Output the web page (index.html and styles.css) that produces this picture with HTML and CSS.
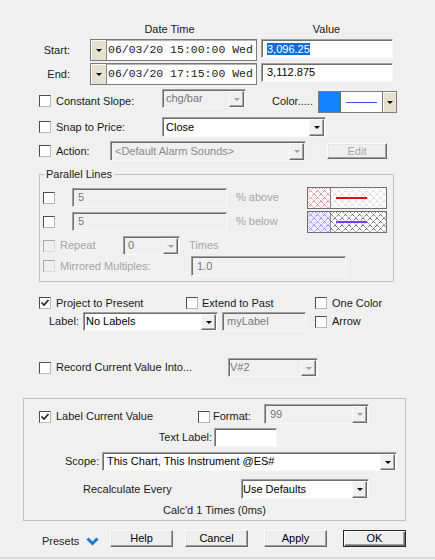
FILE: index.html
```html
<!DOCTYPE html>
<html>
<head>
<meta charset="utf-8">
<title>Line Properties</title>
<link rel="stylesheet" href="styles.css">
</head>
<body>
<div class="dlg">
  <div class="row r-head">
    <div class="h-dt">Date Time</div>
    <div class="h-val">Value</div>
  </div>

  <div class="row r-dt">
    <div class="dt-lbl">Start:</div>
    <div class="dtcombo"><span class="dtbtn"><i class="arr"></i></span><span class="dttxt">06/03/20 15:00:00 Wed</span></div>
    <div class="tb val"><span class="sel">3,096.25</span></div>
  </div>
  <div class="row r-dt r-end">
    <div class="dt-lbl">End:</div>
    <div class="dtcombo"><span class="dtbtn"><i class="arr"></i></span><span class="dttxt">06/03/20 17:15:00 Wed</span></div>
    <div class="tb val"><span>3,112.875</span></div>
  </div>

  <div class="row r-cs pad39">
    <span class="cb"></span>
    <span class="lbl w-cs">Constant Slope:</span>
    <div class="combo dis c-chg"><span class="ctxt">chg/bar</span><span class="dd"><i class="arr"></i></span></div>
    <span class="color-lbl">Color.....</span>
    <div class="colorw"><span class="sw"></span><span class="lnarea"><i class="ln"></i></span><span class="cbtn"><i class="arr"></i></span></div>
  </div>

  <div class="row r-snap pad39">
    <span class="cb"></span>
    <span class="lbl w-cs">Snap to Price:</span>
    <div class="combo c-close"><span class="ctxt">Close</span><span class="dd"><i class="arr"></i></span></div>
  </div>

  <div class="row r-action pad39">
    <span class="cb"></span>
    <span class="lbl w-act">Action:</span>
    <div class="combo dis c-alarm"><span class="ctxt">&lt;Default Alarm Sounds&gt;</span><span class="dd"><i class="arr"></i></span></div>
    <div class="btn dis b-edit">Edit</div>
  </div>

  <div class="grp1">
    <div class="gtitle">Parallel Lines</div>
    <div class="row grow g-r1">
      <span class="cb"></span>
      <div class="tb dis g-tb">5</div>
      <span class="gray pct">% above</span>
      <svg class="swatch" width="80" height="22" viewBox="0 0 80 22">
        <defs>
          <pattern id="pRed" width="7" height="7" patternUnits="userSpaceOnUse">
            <rect width="7" height="7" fill="#fff"/>
            <path d="M0 0L7 7M7 0L0 7" stroke="#d23a3a" stroke-width="0.9" stroke-dasharray="1 1"/>
          </pattern>
          <pattern id="pLight" width="7" height="7" patternUnits="userSpaceOnUse">
            <rect width="7" height="7" fill="#fff"/>
            <path d="M0 0L7 7M7 0L0 7" stroke="#bdbdbd" stroke-width="0.9" stroke-dasharray="1 1"/>
          </pattern>
        </defs>
        <rect x="0.5" y="0.5" width="79" height="21" fill="#fff" stroke="#707070"/>
        <rect x="1" y="1" width="22" height="20" fill="url(#pRed)"/>
        <line x1="23.5" y1="1" x2="23.5" y2="21" stroke="#8a8a8a"/>
        <rect x="24" y="1" width="55" height="20" fill="url(#pLight)"/>
        <line x1="29" y1="11" x2="60" y2="11" stroke="#e01010" stroke-width="2"/>
      </svg>
    </div>
    <div class="row grow g-r2">
      <span class="cb"></span>
      <div class="tb dis g-tb">5</div>
      <span class="gray pct">% below</span>
      <svg class="swatch" width="80" height="22" viewBox="0 0 80 22">
        <defs>
          <pattern id="pBlue" width="7" height="7" patternUnits="userSpaceOnUse">
            <rect width="7" height="7" fill="#eeeaff"/>
            <path d="M0 0L7 7M7 0L0 7" stroke="#5a4cff" stroke-width="0.9" stroke-dasharray="1 1"/>
          </pattern>
          <pattern id="pBlack" width="7" height="7" patternUnits="userSpaceOnUse">
            <rect width="7" height="7" fill="#fff"/>
            <path d="M0 0L7 7M7 0L0 7" stroke="#1a1a1a" stroke-width="0.9" stroke-dasharray="1 1"/>
          </pattern>
        </defs>
        <rect x="0.5" y="0.5" width="79" height="21" fill="#fff" stroke="#707070"/>
        <rect x="1" y="1" width="22" height="20" fill="url(#pBlue)"/>
        <line x1="23.5" y1="1" x2="23.5" y2="21" stroke="#8a8a8a"/>
        <rect x="24" y="1" width="55" height="20" fill="url(#pBlack)"/>
        <line x1="29" y1="11" x2="60" y2="11" stroke="#7a3cf0" stroke-width="2"/>
      </svg>
    </div>
    <div class="row grow g-r3">
      <span class="cb dis"></span>
      <span class="lbl gray w-rep">Repeat</span>
      <div class="combo dis c-rep"><span class="ctxt">0</span><span class="dd"><i class="arr"></i></span></div>
      <span class="gray times">Times</span>
    </div>
    <div class="row grow g-r4">
      <span class="cb dis"></span>
      <span class="lbl gray w-mir">Mirrored Multiples:</span>
      <div class="tb dis g-tb2">1.0</div>
    </div>
  </div>

  <div class="row r-proj pad39">
    <span class="cb on"><svg width="10" height="10" viewBox="0 0 10 10"><path d="M1.5 4.5L4 7L8.5 2" fill="none" stroke="#222" stroke-width="1.7"/></svg></span>
    <span class="lbl w-proj">Project to Present</span>
    <span class="cb"></span>
    <span class="lbl4 w-ext">Extend to Past</span>
    <span class="cb"></span>
    <span class="lbl">One Color</span>
  </div>

  <div class="row r-label">
    <span class="lab-lbl">Label:</span>
    <div class="combo c-nolab"><span class="ctxt">No Labels</span><span class="dd"><i class="arr"></i></span></div>
    <div class="tb dis t-mylab">myLabel</div>
    <span class="cb cb-arrow"></span>
    <span class="lbl">Arrow</span>
  </div>

  <div class="row r-rec pad39">
    <span class="cb"></span>
    <span class="lbl w-rec">Record Current Value Into...</span>
    <div class="combo dis c-v2"><span class="ctxt">V#2</span><span class="dd"><i class="arr"></i></span></div>
  </div>

  <div class="grp2">
    <div class="row r-lcv">
      <span class="cb on lo"><svg width="10" height="10" viewBox="0 0 10 10"><path d="M1.5 4.5L4 7L8.5 2" fill="none" stroke="#222" stroke-width="1.7"/></svg></span>
      <span class="lbl lo w-lcv">Label Current Value</span>
      <span class="cb lo"></span>
      <span class="lo w-fmt">Format:</span>
      <div class="combo dis c-99"><span class="ctxt">99</span><span class="dd"><i class="arr"></i></span></div>
    </div>
    <div class="row r-tl">
      <span class="tl-lbl">Text Label:</span>
      <div class="tb t-tl"></div>
    </div>
    <div class="row r-scope">
      <span class="sc-lbl">Scope:</span>
      <div class="combo c-scope"><span class="ctxt">This Chart, This Instrument @ES#</span><span class="dd"><i class="arr"></i></span></div>
    </div>
    <div class="row r-recalc">
      <span class="rc-lbl">Recalculate Every</span>
      <div class="combo c-def"><span class="ctxt">Use Defaults</span><span class="dd"><i class="arr"></i></span></div>
    </div>
    <div class="row r-calcd">Calc'd 1 Times (0ms)</div>
  </div>

  <div class="row r-foot">
    <span class="presets">Presets</span>
    <svg class="chev" width="13" height="9" viewBox="0 0 13 9"><path d="M1.5 1.5L6.5 6.5L11.5 1.5" fill="none" stroke="#1c7cd5" stroke-width="3"/></svg>
    <div class="btn b-help">Help</div>
    <div class="btn b-cancel">Cancel</div>
    <div class="btn b-apply">Apply</div>
    <div class="btn def b-ok">OK</div>
  </div>
  <div class="bottom-line"></div>
</div>
</body>
</html>
```

FILE: styles.css
```css
* { box-sizing: border-box; }
html, body { margin: 0; padding: 0; }
body {
  width: 435px;
  height: 560px;
  overflow: hidden;
  background: #f0f0f0;
  font-family: "Liberation Sans", Arial, sans-serif;
  font-size: 11px;
  line-height: 13px;
  color: #1a1a1a;
}
.dlg { padding-top: 22px; }
.row { display: flex; align-items: center; white-space: nowrap; }
.pad39 { padding-left: 39px; }
.gray { color: #a6a6a6; }

/* arrows */
.arr {
  display: block;
  width: 0; height: 0;
  border-left: 3px solid transparent;
  border-right: 3px solid transparent;
  border-top: 3px solid #000;
}
.dis .arr { border-top-color: #a0a0a0; }

/* header */
.r-head { height: 14px; }
.h-dt { margin-left: 86px; width: 167px; text-align: center; }
.h-val { margin-left: 8px; width: 131px; text-align: center; }

/* date rows */
.r-dt { height: 22px; margin-top: 3px; }
.r-end { margin-top: 2px; }
.dt-lbl { width: 70px; text-align: right; }
.dtcombo {
  margin-left: 20px;
  width: 167px;
  height: 22px;
  display: flex;
  border: 1px solid #7a7a7a;
  background: #fff;
  box-shadow: inset 1px 1px 0 #b4b4b4;
}
.dtbtn {
  width: 16px;
  flex: none;
  background: #e4e1d1;
  border-right: 1px solid #8a8a8a;
  box-shadow: inset 1px 1px 0 #fbfaf3;
  display: flex;
  align-items: center;
  justify-content: center;
}
.dttxt {
  font-family: "Liberation Mono", "Courier New", monospace;
  font-size: 11.5px;
  line-height: 20px;
  padding-left: 1px;
  color: #202020;
}

/* text boxes */
.tb {
  border: 1px solid;
  border-color: #a0a0a0 #f9f9f9 #f9f9f9 #a0a0a0;
  box-shadow: inset 1px 1px 0 #6e6e6e;
  background: #fff;
  display: flex;
  align-items: center;
  padding-left: 5px;
  color: #000;
  overflow: hidden;
}
.tb.dis { background: #f0f0f0; color: #7a7a7a; }
.val { margin-left: 4px; width: 132px; height: 19px; align-self: flex-start; }
.sel { background: #0a6fdc; color: #fff; line-height: 12px; }

/* combos */
.combo {
  display: flex;
  border: 1px solid;
  border-color: #a0a0a0 #f9f9f9 #f9f9f9 #a0a0a0;
  box-shadow: inset 1px 1px 0 #6e6e6e;
  background: #fff;
  color: #000;
}
.combo.dis { background: #f0f0f0; color: #777; }
.ctxt { flex: 1; padding-left: 3px; display: flex; align-items: center; overflow: hidden; }
.dd {
  width: 15px;
  flex: none;
  margin: 1px 1px 0 0;
  background: #f0f0f0;
  border: 1px solid;
  border-color: #fafafa #6a6a6a #6a6a6a #fafafa;
  box-shadow: inset -1px -1px 0 #a8a8a8;
  display: flex;
  align-items: center;
  justify-content: center;
}

/* checkboxes */
.cb {
  width: 12px;
  height: 12px;
  flex: none;
  border: 1px solid;
  border-color: #4e4e4e #b8b8b8 #b8b8b8 #4e4e4e;
  background: #fff;
  display: flex;
  align-items: center;
  justify-content: center;
}
.cb.dis { border-color: #a9a9a9 #dadada #dadada #a9a9a9; background: #f0f0f0; }
.cb svg { display: block; }
.lbl { margin-left: 5px; }
.lbl4 { margin-left: 4px; }

/* constant slope row */
.r-cs { height: 24px; margin-top: 4px; }
.w-cs { width: 106px; }
.c-chg { width: 84px; height: 19px; align-self: flex-start; }
.color-lbl { margin-left: 26px; width: 46px; }
.colorw {
  width: 79px;
  height: 22px;
  align-self: flex-end;
  display: flex;
  border: 1px solid #7e7e7e;
  background: #fff;
}
.sw { width: 22px; background: #1282ff; border-right: 1px solid #6a6a6a; }
.lnarea { flex: 1; display: flex; align-items: center; justify-content: center; background: #fff; }
.ln { display: block; width: 31px; height: 1px; background: #2a64dc; }
.cbtn {
  width: 14px;
  background: #e4e1d1;
  border-left: 1px solid #7e7e7e;
  box-shadow: inset 1px 1px 0 #fbfaf3;
  display: flex;
  align-items: center;
  justify-content: center;
}

/* snap / action */
.r-snap { height: 20px; margin-top: 4px; }
.c-close { width: 164px; height: 20px; }
.r-action { height: 20px; margin-top: 4px; }
.w-act { width: 54px; }
.c-alarm { width: 196px; height: 20px; }
.c-alarm .ctxt { padding-left: 4px; color: #8a8a8a; }

/* buttons */
.btn {
  width: 63px;
  height: 17px;
  flex: none;
  display: flex;
  align-items: center;
  justify-content: center;
  background: #efefef;
  border: 1px solid;
  border-color: #fdfdfd #696969 #696969 #fdfdfd;
  box-shadow: inset -1px -1px 0 #a0a0a0, inset 1px 1px 0 #e6e6e6;
  color: #000;
}
.btn.dis { color: #a8a8a8; }
.btn.def {
  border-color: #2a2a2a;
  box-shadow: inset 1px 1px 0 #fdfdfd, inset -1px -1px 0 #696969, inset -2px -2px 0 #a0a0a0;
}
.b-edit { margin-left: 21px; width: 60px; height: 16px; }

/* parallel lines group */
.grp1 {
  margin: 13px 0 0 39px;
  width: 355px;
  height: 108px;
  border: 1px solid #c2c2c2;
}
.gtitle {
  width: fit-content;
  margin: -7px 0 0 4px;
  padding: 0 2px;
  height: 13px;
  background: #f0f0f0;
  color: #1a1a1a;
}
.grow { padding-left: 3px; height: 19px; }
.g-r1 { margin-top: 7px; }
.g-r2 { margin-top: 5px; }
.g-r3 { margin-top: 5px; }
.g-r4 { margin-top: 1px; height: 20px; }
.g-tb { margin-left: 17px; width: 155px; height: 19px; }
.pct { margin-left: 9px; width: 71px; }
.swatch { flex: none; display: block; }
.w-rep { width: 63px; }
.c-rep { width: 57px; height: 19px; }
.c-rep .ctxt { padding-left: 4px; }
.times { margin-left: 9px; }
.w-mir { width: 131px; }
.g-tb2 { width: 155px; height: 20px; }

/* project / label rows */
.r-proj { height: 14px; margin-top: 14px; }
.w-proj { width: 130px; }
.w-ext { width: 113px; }
.r-label { height: 19px; margin-top: 2px; }
.lab-lbl { margin-left: 49px; width: 34px; }
.c-nolab { width: 135px; height: 19px; }
.c-nolab .ctxt { padding-left: 2px; }
.t-mylab { margin-left: 4px; width: 84px; height: 19px; padding-left: 4px; color: #8a8a8a; }
.cb-arrow { margin-left: 9px; }

/* record */
.r-rec { height: 19px; margin-top: 27px; }
.w-rec { width: 172px; }
.c-v2 { width: 90px; height: 19px; }
.c-v2 .ctxt { padding-left: 1px; }

/* lower group */
.grp2 {
  margin: 21px 0 0 23px;
  width: 383px;
  height: 123px;
  border: 1px solid #c2c2c2;
}
.r-lcv { height: 20px; margin-top: 5px; padding-left: 15px; align-items: flex-end; }
.lo { margin-bottom: 1px; }
.w-lcv { width: 142px; }
.w-fmt { margin-left: 3px; width: 51px; }
.c-99 { width: 105px; height: 20px; }
.c-99 .ctxt { padding-left: 5px; }
.r-tl { height: 19px; margin-top: 4px; }
.tl-lbl { width: 188px; text-align: right; }
.t-tl { margin-left: 2px; width: 63px; height: 19px; }
.r-scope { height: 19px; margin-top: 5px; }
.sc-lbl { margin-left: 41px; width: 37px; }
.c-scope { width: 295px; height: 19px; }
.c-scope .ctxt { padding-left: 4px; }
.r-recalc { height: 20px; margin-top: 8px; }
.rc-lbl { margin-left: 59px; width: 158px; }
.c-def { width: 128px; height: 20px; }
.c-def .ctxt { padding-left: 1px; }
.r-calcd { height: 14px; margin-top: 4px; justify-content: center; }

/* footer */
.r-foot { height: 17px; margin-top: 9px; }
.presets { margin-left: 42px; width: 44px; margin-top: 5px; color: #2a2a2a; }
.chev { flex: none; display: block; margin-top: 5px; }
.b-help { margin-left: 11px; }
.b-cancel { margin-left: 12px; }
.b-apply { margin-left: 16px; }
.b-ok { margin-left: 16px; }
.bottom-line { margin-top: 10px; height: 2px; background: #dcdcdc; }
```
